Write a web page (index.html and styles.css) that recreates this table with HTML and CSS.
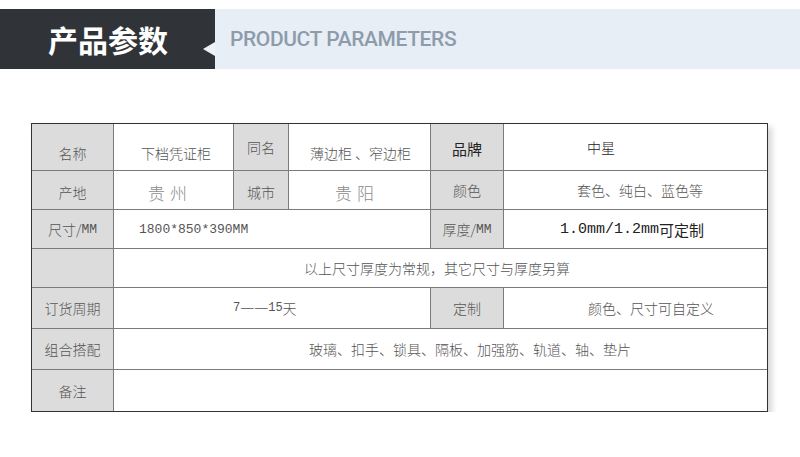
FILE: index.html
```html
<!DOCTYPE html>
<html lang="zh">
<head>
<meta charset="utf-8">
<link rel="stylesheet" href="styles.css">
</head>
<body>
<header class="head">
  <div class="head-dark">
    <h1 class="head-title">产品参数</h1>
    <span class="head-arrow"></span>
  </div>
  <div class="head-light">PRODUCT PARAMETERS</div>
</header>

<main class="wrap">
  <div class="params">
    <div class="c lab r1">名称</div>
    <div class="c val r1 pl27">下档凭证柜</div>
    <div class="c lab r1b">同名</div>
    <div class="c val r1 pl21">薄边柜 、窄边柜</div>
    <div class="c lab dark big">品牌</div>
    <div class="c val dark pl83">中星</div>

    <div class="c lab low">产地</div>
    <div class="c val city pl34">贵州</div>
    <div class="c lab low">城市</div>
    <div class="c val city pl46">贵阳</div>
    <div class="c lab">颜色</div>
    <div class="c val pl73">套色、纯白、蓝色等</div>

    <div class="c lab">尺寸/<span class="mono">MM</span></div>
    <div class="c val span3 pl25 mono">1800*850*390MM</div>
    <div class="c lab">厚度/<span class="mono">MM</span></div>
    <div class="c val dark pl56 thick"><span class="mono">1.0mm/1.2mm</span>可定制</div>

    <div class="c lab"></div>
    <div class="c val span5 pl190">以上尺寸厚度为常规，其它尺寸与厚度另算</div>

    <div class="c lab">订货周期</div>
    <div class="c val span3 pl119"><span class="mono sm">7</span>一一<span class="mono sm">15</span>天</div>
    <div class="c lab">定制</div>
    <div class="c val pl84">颜色、尺寸可自定义</div>

    <div class="c lab">组合搭配</div>
    <div class="c val span5 pl195">玻璃、扣手、锁具、隔板、加强筋、轨道、轴、垫片</div>

    <div class="c lab">备注</div>
    <div class="c val span5"></div>
  </div>
</main>
</body>
</html>
```

FILE: styles.css
```css
html, body {
  margin: 0;
  padding: 0;
  background: #ffffff;
}

body {
  font-family: "Noto Sans CJK SC", "Liberation Sans", sans-serif;
}

.head {
  display: flex;
  height: 60px;
  margin-top: 9px;
}

.head-dark {
  position: relative;
  width: 215px;
  background: #303438;
  display: flex;
  align-items: center;
  padding-left: 48px;
  box-sizing: border-box;
}

.head-title {
  margin: 0;
  color: #ffffff;
  font-size: 30px;
  font-weight: 700;
  letter-spacing: 0;
  line-height: 1;
}

.head-arrow {
  position: absolute;
  right: 0;
  top: 33px;
  width: 0;
  height: 0;
  border-top: 7px solid transparent;
  border-bottom: 7px solid transparent;
  border-right: 12px solid #eef2f8;
}

.head-light {
  flex: 1;
  background: #e8eef6;
  display: flex;
  align-items: center;
  padding-left: 15px;
  color: #8d9cab;
  font-family: Roboto, "Liberation Sans", sans-serif;
  font-size: 21px;
  letter-spacing: -0.4px;
  font-weight: 500;
}

.wrap {
  padding: 54px 0 0 31px;
}

.params {
  width: 735px;
  display: grid;
  grid-template-columns: 81px 119px 54px 141px 72px 263px;
  grid-template-rows: 46px 38px 38px 38px 40px 40px 41px;
  gap: 1px;
  background: #7b7b7b;
  border: 1px solid #333333;
  box-shadow: 4px 4px 6px rgba(0, 0, 0, 0.16);
}

.c {
  display: flex;
  align-items: center;
  box-sizing: border-box;
  font-size: 14px;
  color: #555555;
  font-weight: 300;
  white-space: nowrap;
}

.lab {
  background: #dcdcdc;
  justify-content: center;
}

.val {
  background: #ffffff;
  justify-content: flex-start;
}

.r1 { padding-top: 12px; }
.r1b { padding-bottom: 0; }
.low { padding-top: 4px; }

.dark { color: #222222; }
.big { font-size: 15px; font-weight: 400; padding-top: 3px; }

.city {
  color: #8c8c8c;
  font-size: 17px;
  letter-spacing: 5px;
  padding-top: 4px;
}

.thick { font-size: 15px; font-weight: 400; }

.mono {
  font-family: "Liberation Mono", "Noto Sans CJK SC", monospace;
  font-size: 13px;
}

.thick .mono { font-size: 15px; }
.mono.sm { font-size: 12px; }

.span3 { grid-column: span 3; }
.span5 { grid-column: span 5; }

.pl21 { padding-left: 21px; }
.pl25 { padding-left: 25px; }
.pl27 { padding-left: 27px; }
.pl34 { padding-left: 34px; }
.pl46 { padding-left: 46px; }
.pl56 { padding-left: 56px; }
.pl73 { padding-left: 73px; }
.pl83 { padding-left: 83px; }
.pl84 { padding-left: 84px; }
.pl119 { padding-left: 119px; }
.pl190 { padding-left: 190px; }
.pl195 { padding-left: 195px; }
```
